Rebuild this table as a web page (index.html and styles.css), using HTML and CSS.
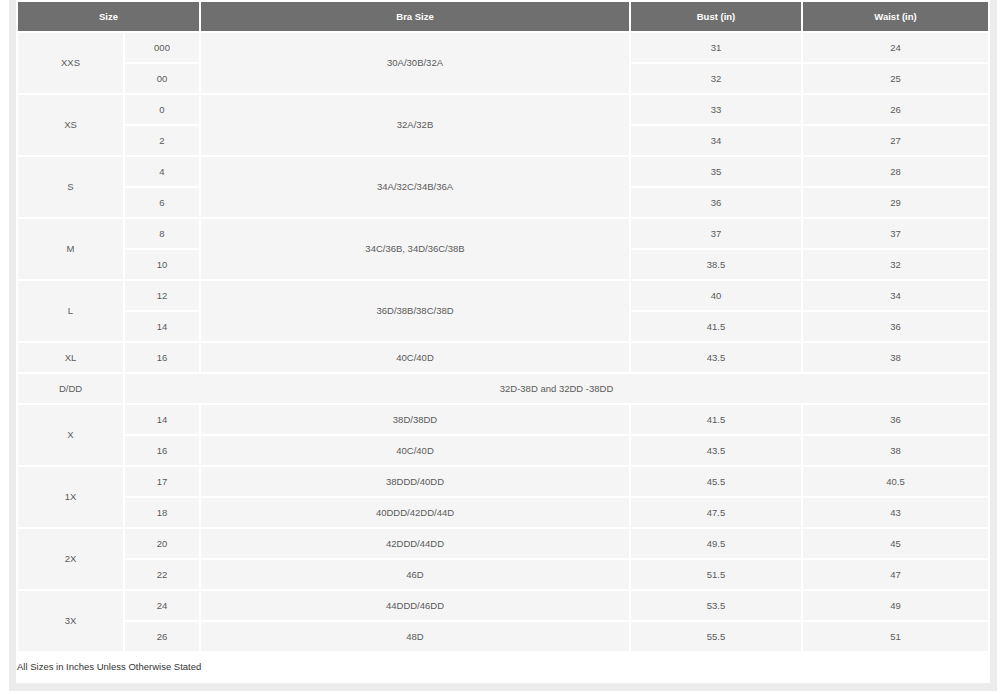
FILE: index.html
```html
<!DOCTYPE html>
<html>
<head>
<meta charset="utf-8">
<link rel="stylesheet" href="styles.css">
</head>
<body>
<div class="frame">
  <div class="panel">
    <table class="chart">
      <colgroup>
        <col class="c1"><col class="c2"><col class="c3"><col class="c4"><col class="c5">
      </colgroup>
      <thead>
        <tr><th colspan="2">Size</th><th>Bra Size</th><th>Bust (in)</th><th>Waist (in)</th></tr>
      </thead>
      <tbody>
        <tr><td rowspan="2">XXS</td><td>000</td><td rowspan="2">30A/30B/32A</td><td>31</td><td>24</td></tr>
        <tr><td>00</td><td>32</td><td>25</td></tr>
        <tr><td rowspan="2">XS</td><td>0</td><td rowspan="2">32A/32B</td><td>33</td><td>26</td></tr>
        <tr><td>2</td><td>34</td><td>27</td></tr>
        <tr><td rowspan="2">S</td><td>4</td><td rowspan="2">34A/32C/34B/36A</td><td>35</td><td>28</td></tr>
        <tr><td>6</td><td>36</td><td>29</td></tr>
        <tr><td rowspan="2">M</td><td>8</td><td rowspan="2">34C/36B, 34D/36C/38B</td><td>37</td><td>37</td></tr>
        <tr><td>10</td><td>38.5</td><td>32</td></tr>
        <tr><td rowspan="2">L</td><td>12</td><td rowspan="2">36D/38B/38C/38D</td><td>40</td><td>34</td></tr>
        <tr><td>14</td><td>41.5</td><td>36</td></tr>
        <tr><td>XL</td><td>16</td><td>40C/40D</td><td>43.5</td><td>38</td></tr>
        <tr><td>D/DD</td><td colspan="4">32D-38D and 32DD -38DD</td></tr>
        <tr><td rowspan="2">X</td><td>14</td><td>38D/38DD</td><td>41.5</td><td>36</td></tr>
        <tr><td>16</td><td>40C/40D</td><td>43.5</td><td>38</td></tr>
        <tr><td rowspan="2">1X</td><td>17</td><td>38DDD/40DD</td><td>45.5</td><td>40.5</td></tr>
        <tr><td>18</td><td>40DDD/42DD/44D</td><td>47.5</td><td>43</td></tr>
        <tr><td rowspan="2">2X</td><td>20</td><td>42DDD/44DD</td><td>49.5</td><td>45</td></tr>
        <tr><td>22</td><td>46D</td><td>51.5</td><td>47</td></tr>
        <tr><td rowspan="2">3X</td><td>24</td><td>44DDD/46DD</td><td>53.5</td><td>49</td></tr>
        <tr><td>26</td><td>48D</td><td>55.5</td><td>51</td></tr>
      </tbody>
    </table>
    <p class="note">All Sizes in Inches Unless Otherwise Stated</p>
  </div>
</div>
</body>
</html>
```

FILE: styles.css
```css
html, body {
  margin: 0;
  padding: 0;
  background: #ffffff;
}

body {
  font-family: "Liberation Sans", Arial, sans-serif;
  font-size: 9.5px;
  color: #5a5a5a;
}

.frame {
  margin-left: 9px;
  width: 974px;
  padding: 0 7px 8px 7px;
  background: #ececec;
}

.panel {
  background: #ffffff;
}

.chart {
  width: 974px;
  border-collapse: separate;
  border-spacing: 2px;
  table-layout: fixed;
}

.c1 { width: 105px; }
.c2 { width: 74px; }
.c3 { width: 428px; }
.c4 { width: 170px; }
.c5 { width: 185px; }

.chart th {
  height: 29px;
  padding: 0;
  background: #6f6f6f;
  color: #ffffff;
  font-weight: bold;
  text-align: center;
  vertical-align: middle;
}

.chart td {
  height: 29px;
  padding: 0;
  background: #f5f5f5;
  text-align: center;
  vertical-align: middle;
  line-height: 12px;
}

.note {
  margin: 0;
  padding: 8px 1px 10px 1px;
  line-height: 12px;
  color: #333333;
}
```
